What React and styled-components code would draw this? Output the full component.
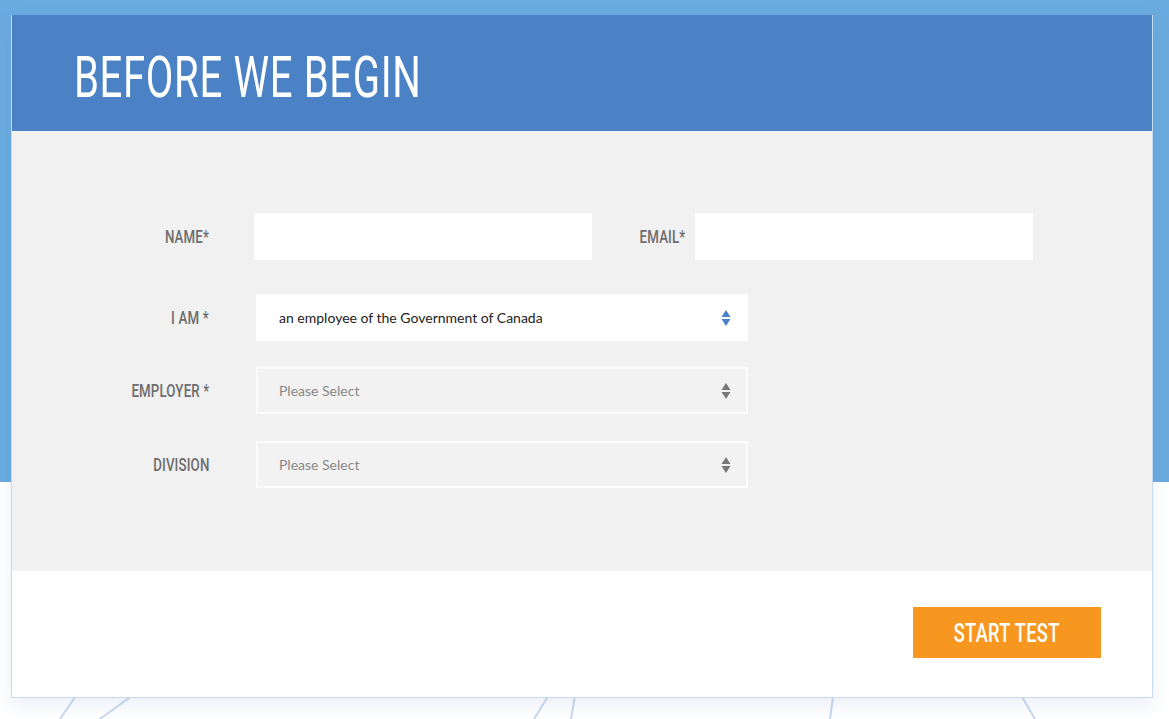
import styled, { createGlobalStyle } from 'styled-components';

const GlobalStyle = createGlobalStyle`
  html, body {
    margin: 0;
    padding: 0;
  }
  body {
    width: 1169px;
    height: 719px;
    overflow: hidden;
    background: linear-gradient(#6aaade 0, #6aaade 482px, #ffffff 482px);
    font-family: Lato, "Noto Sans", sans-serif;
  }
`;

// no condensed face is installed, so the narrow look is made with scaleX
const Squeeze = styled.span`
  display: inline-block;
  white-space: nowrap;
  transform: scaleX(${p => p.$x || 0.72});
  transform-origin: ${p => p.$origin || 'left'} center;
`;

const Page = styled.div`
  position: relative;
  height: 719px;
  padding: 15px 16px 0 11px;
  box-sizing: border-box;
`;

const Backdrop = styled.svg`
  position: absolute;
  left: 0;
  top: 0;
  width: 1169px;
  height: 719px;
  pointer-events: none;
`;

const Card = styled.div`
  position: relative;
  width: 1142px;
  border: 1px solid #c6d9ef;
  border-top: none;
  box-sizing: border-box;
  background: #fff;
  box-shadow: 0 8px 18px rgba(90, 130, 190, 0.12);
`;

const Header = styled.header`
  height: 116px;
  background: #4a82c5;
  padding-left: 62px;
  display: flex;
  align-items: center;
  box-sizing: border-box;
`;

const Title = styled.h1`
  margin: 0;
  color: #fff;
  font-family: Roboto, sans-serif;
  font-weight: 400;
  font-size: 58px;
  letter-spacing: 1px;
  line-height: 1;
  padding-top: 8px;
`;

const Body = styled.div`
  background: #f1f1f1;
  padding: 82px 0 83px;
  display: flex;
  flex-direction: column;
  gap: 30px;
`;

const Row = styled.div`
  display: flex;
  align-items: center;
  margin-top: ${p => p.$top || 0}px;
`;

const Label = styled.label`
  width: ${p => p.$width || 197}px;
  margin-right: ${p => p.$gap || 45}px;
  display: flex;
  justify-content: flex-end;
  font-family: Roboto, sans-serif;
  font-weight: 500;
  font-size: 19px;
  color: #6d6d6d;
  letter-spacing: 0.2px;
  flex-shrink: 0;
`;

const TextInput = styled.div`
  width: ${p => p.$width}px;
  height: 47px;
  background: #fff;
  flex-shrink: 0;
`;

const Select = styled.div`
  width: 492px;
  height: 47px;
  box-sizing: border-box;
  margin-left: 2px;
  display: flex;
  align-items: center;
  justify-content: space-between;
  padding: 0 ${p => (p.$disabled ? 15 : 17)}px 0 ${p => (p.$disabled ? 21 : 23)}px;
  background: ${p => (p.$disabled ? '#f2f2f2' : '#fff')};
  border: ${p => (p.$disabled ? '2px solid #fbfbfb' : 'none')};
  font-size: 14px;
  color: ${p => (p.$disabled ? '#888' : '#222')};
`;

const Arrows = styled.svg`
  width: 10px;
  height: 20px;
`;

const Footer = styled.div`
  height: 126px;
  display: flex;
  align-items: flex-start;
  justify-content: flex-end;
  padding: 36px 51px 0 0;
  box-sizing: border-box;
`;

const StartButton = styled.button`
  width: 188px;
  height: 51px;
  border: none;
  background: #f7971f;
  color: #fff;
  font-family: Roboto, sans-serif;
  font-size: 26px;
  font-weight: 500;
  letter-spacing: 0.5px;
  display: flex;
  align-items: center;
  justify-content: center;
  padding: 0;
`;

const SelectArrows = ({ color }) => (
  <Arrows viewBox="0 0 10 20">
    <path d="M5 2 L9.5 9 H0.5 Z" fill={color} />
    <path d="M5 18 L9.5 11 H0.5 Z" fill={color} />
  </Arrows>
);

const FieldLabel = ({ children, ...rest }) => (
  <Label {...rest}>
    <Squeeze $x={0.7} $origin="right">{children}</Squeeze>
  </Label>
);

export default function App() {
  return (
    <>
      <GlobalStyle />
      <Page>
        <Backdrop viewBox="0 0 1169 719">
          <g stroke="#c8d9ee" strokeWidth="2" fill="none">
            <line x1="60" y1="719" x2="80" y2="690" />
            <line x1="100" y1="719" x2="140" y2="690" />
            <line x1="534" y1="719" x2="552" y2="690" />
            <line x1="571" y1="719" x2="576" y2="690" />
            <line x1="830" y1="719" x2="834" y2="690" />
            <line x1="1035" y1="719" x2="1018" y2="690" />
          </g>
        </Backdrop>
        <Card>
          <Header>
            <Title>
              <Squeeze $x={0.69}>BEFORE WE BEGIN</Squeeze>
            </Title>
          </Header>
          <Body>
            <Row>
              <FieldLabel>NAME*</FieldLabel>
              <TextInput $width={338} />
              <FieldLabel $width={63} $gap={10} style={{ marginLeft: 30 }}>EMAIL*</FieldLabel>
              <TextInput $width={338} />
            </Row>
            <Row $top={4}>
              <FieldLabel>I AM *</FieldLabel>
              <Select>
                an employee of the Government of Canada
                <SelectArrows color="#4a82c5" />
              </Select>
            </Row>
            <Row $top={-4}>
              <FieldLabel>EMPLOYER *</FieldLabel>
              <Select $disabled>
                Please Select
                <SelectArrows color="#777" />
              </Select>
            </Row>
            <Row $top={-3}>
              <FieldLabel>DIVISION</FieldLabel>
              <Select $disabled>
                Please Select
                <SelectArrows color="#777" />
              </Select>
            </Row>
          </Body>
          <Footer>
            <StartButton>
              <Squeeze $x={0.7} $origin="center">START TEST</Squeeze>
            </StartButton>
          </Footer>
        </Card>
      </Page>
    </>
  );
}
